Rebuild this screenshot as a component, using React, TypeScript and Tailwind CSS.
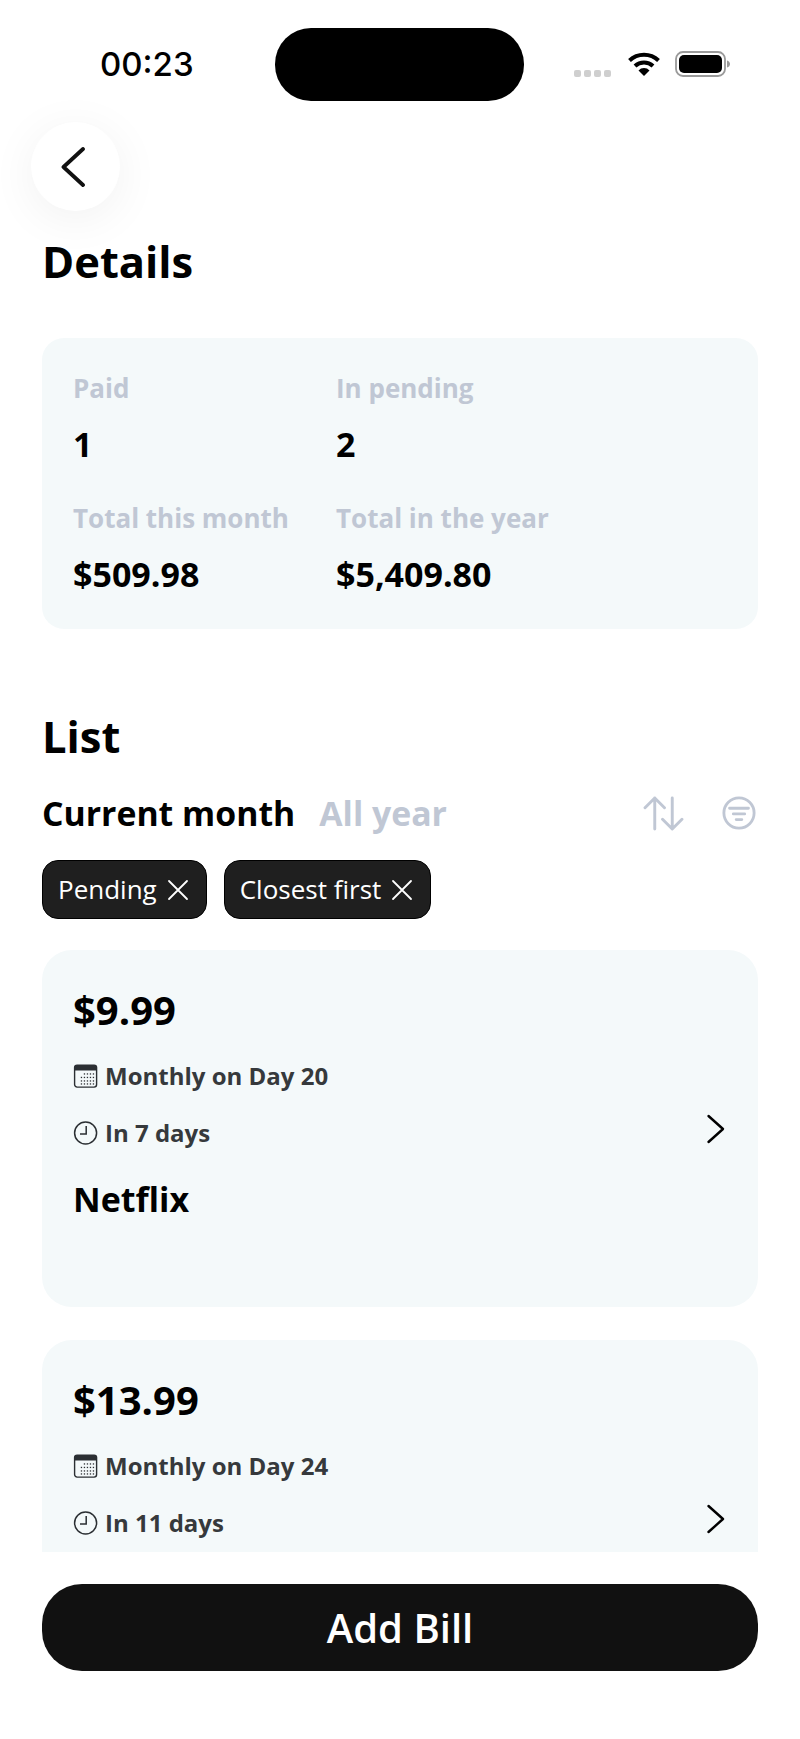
import React from "react";

const Calendar = () => (
  <svg width="25" height="26" viewBox="0 0 25 26" fill="none" className="shrink-0">
    <rect x="1.6" y="2.1" width="22" height="22" rx="2.5" stroke="#2b2f33" strokeWidth="1.4" />
    <path d="M1.6 4.6a2.5 2.5 0 0 1 2.5-2.5h17a2.5 2.5 0 0 1 2.5 2.5v3h-22z" fill="#2b2f33" />
    {[8.5, 11.5, 14.5, 17.5, 20.5].map((x) =>
      [11, 14.5, 18, 21].map((y) =>
        (x < 10 && y < 12) ? null : <rect key={`${x}-${y}`} x={x - 0.7} y={y - 0.7} width="1.3" height="1.3" fill="#2b2f33" />
      )
    )}
  </svg>
);

const Clock = () => (
  <svg width="25" height="26" viewBox="0 0 25 26" fill="none" className="shrink-0">
    <circle cx="12.6" cy="13" r="11" stroke="#2b2f33" strokeWidth="1.5" />
    <path d="M13.2 6v8H7" stroke="#2b2f33" strokeWidth="1.5" />
  </svg>
);

const Chevron = () => (
  <svg width="20" height="30" viewBox="0 0 20 30" fill="none">
    <path d="M2.5 2 L17 15 L2.5 28" stroke="#000" strokeWidth="2.4" strokeLinecap="round" strokeLinejoin="round" />
  </svg>
);

const XIcon = () => (
  <svg width="22" height="22" viewBox="0 0 22 22" fill="none">
    <path d="M2 2 L20 20 M20 2 L2 20" stroke="#fff" strokeWidth="1.8" strokeLinecap="round" />
  </svg>
);

const Chip = ({ label }: { label: string }) => (
  <div className="flex h-[59px] items-center gap-[10px] rounded-[16px] border border-[#000] bg-[#1f1f1f] pr-[17px] pl-[15px] text-[26px] text-white">
    <span>{label}</span>
    <XIcon />
  </div>
);

const Stat = ({ label, value }: { label: string; value: string }) => (
  <div className="flex flex-col whitespace-nowrap">
    <span className="text-[26px] leading-[36px] font-bold text-[#c0c7d4]">{label}</span>
    <span className="mt-[16px] text-[34px] leading-[45px] font-bold text-black">{value}</span>
  </div>
);

const Bill = ({ amount, day, due, name }: { amount: string; day: string; due: string; name?: string }) => (
  <div className="relative h-[357px] shrink-0 rounded-[30px] bg-[#f4f9fa] pt-[33px] pl-[31px]">
    <div className="text-[40px] leading-[53px] font-bold text-black">{amount}</div>
    <div className="mt-[22px] flex h-[36px] items-center gap-[7px] text-[24px] font-bold text-[#36393c]">
      <Calendar />
      <span>{day}</span>
    </div>
    <div className="mt-[21px] flex h-[36px] items-center gap-[7px] text-[24px] font-bold text-[#36393c]">
      <Clock />
      <span>{due}</span>
    </div>
    {name ? <div className="mt-[24px] text-[34px] leading-[48px] font-bold text-black">{name}</div> : null}
    <div className="absolute top-[164px] right-[32px]">
      <Chevron />
    </div>
  </div>
);

export default function App() {
  return (
    <div className="relative flex h-[1739px] w-[800px] flex-col overflow-hidden bg-white font-['Open_Sans',sans-serif]">
      <div className="flex h-[122px] shrink-0 items-start">
        <div className="mt-[44px] ml-[100px] w-[96px] font-['Inter',sans-serif] text-[33px] leading-[40px] font-medium text-black">00:23</div>
        <div className="mt-[28px] ml-[79px] h-[73px] w-[249px] rounded-[36px] bg-black" />
        <div className="mt-[50px] ml-[50px] flex items-center">
          <div className="mt-[18px] flex gap-[3px]">
            <span className="h-[7px] w-[7px] rounded-[2px] bg-[#cfcfcf]" />
            <span className="h-[7px] w-[7px] rounded-[2px] bg-[#cfcfcf]" />
            <span className="h-[7px] w-[7px] rounded-[2px] bg-[#cfcfcf]" />
            <span className="h-[7px] w-[7px] rounded-[2px] bg-[#cfcfcf]" />
          </div>
          <svg width="34" height="26" viewBox="0 0 34 26" fill="none" className="ml-[16px]">
            <path d="M2.5 9.5a21 21 0 0 1 29 0" stroke="#000" strokeWidth="4" />
            <path d="M8 15a13 13 0 0 1 18 0" stroke="#000" strokeWidth="4" />
            <path d="M11.5 19.5a7.5 7.5 0 0 1 11 0L17 25z" fill="#000" />
          </svg>
          <svg width="56" height="28" viewBox="0 0 56 28" fill="none" className="ml-[14px]">
            <rect x="1" y="2" width="49" height="24" rx="7" stroke="#9a9a9a" strokeWidth="1.8" />
            <rect x="4" y="5" width="43" height="18" rx="5" fill="#000" />
            <path d="M52 10.5c2 .5 3 2 3 3.5s-1 3-3 3.5z" fill="#9a9a9a" />
          </svg>
        </div>
      </div>

      <div className="ml-[31px] flex h-[89px] w-[89px] shrink-0 items-center justify-center rounded-full bg-white shadow-[0_8px_48px_rgba(0,0,0,0.06)]">
        <svg width="26" height="40" viewBox="0 0 26 40" fill="none" className="-ml-[5px]">
          <path d="M23 2 L3.5 20 L23 38" stroke="#111" strokeWidth="3.8" strokeLinecap="round" strokeLinejoin="round" />
        </svg>
      </div>

      <div className="relative mt-[23px] ml-[42px] text-[43.5px] leading-[55px] font-bold text-black">Details</div>

      <div className="mx-[42px] mt-[49px] flex h-[291px] shrink-0 gap-[47px] rounded-[22px] bg-[#f4f9fa] pt-[32px] pl-[31px]">
        <div className="flex w-[216px] flex-col gap-[33px]">
          <Stat label="Paid" value="1" />
          <Stat label="Total this month" value="$509.98" />
        </div>
        <div className="flex flex-col gap-[33px]">
          <Stat label="In pending" value="2" />
          <Stat label="Total in the year" value="$5,409.80" />
        </div>
      </div>

      <div className="mt-[80px] ml-[42px] text-[43.5px] leading-[55px] font-bold text-black">List</div>

      <div className="mx-[42px] mt-[26px] flex h-[46px] shrink-0 items-center">
        <span className="text-[33.8px] font-bold text-black">Current month</span>
        <span className="ml-[24px] text-[33.8px] font-bold text-[#c0c7d4]">All year</span>
        <svg width="41" height="35" viewBox="0 0 42 36" fill="none" className="mr-[38px] ml-auto">
          <path d="M12 34V2M2 12 12 2l10 10" stroke="#c0c7d4" strokeWidth="3" strokeLinecap="round" strokeLinejoin="round" />
          <path d="M30 2v32M20 24l10 10 10-10" stroke="#c0c7d4" strokeWidth="3" strokeLinecap="round" strokeLinejoin="round" />
        </svg>
        <svg width="34" height="34" viewBox="0 0 36 36" fill="none" className="mr-[2px]">
          <circle cx="18" cy="18" r="16" stroke="#c0c7d4" strokeWidth="3" />
          <path d="M8 13h20M12 19h12M15 25h6" stroke="#c0c7d4" strokeWidth="3" strokeLinecap="round" />
        </svg>
      </div>

      <div className="mt-[24px] ml-[42px] flex gap-[17px]">
        <Chip label="Pending" />
        <Chip label="Closest first" />
      </div>

      <div className="mx-[42px] mt-[31px] flex h-[602px] shrink-0 flex-col gap-[33px] overflow-hidden">
        <Bill amount="$9.99" day="Monthly on Day 20" due="In 7 days" name="Netflix" />
        <Bill amount="$13.99" day="Monthly on Day 24" due="In 11 days" />
      </div>

      <button className="mx-[42px] mt-[32px] h-[87px] shrink-0 rounded-[40px] bg-[#111111] text-[40px] font-semibold text-white">Add Bill</button>
    </div>
  );
}
